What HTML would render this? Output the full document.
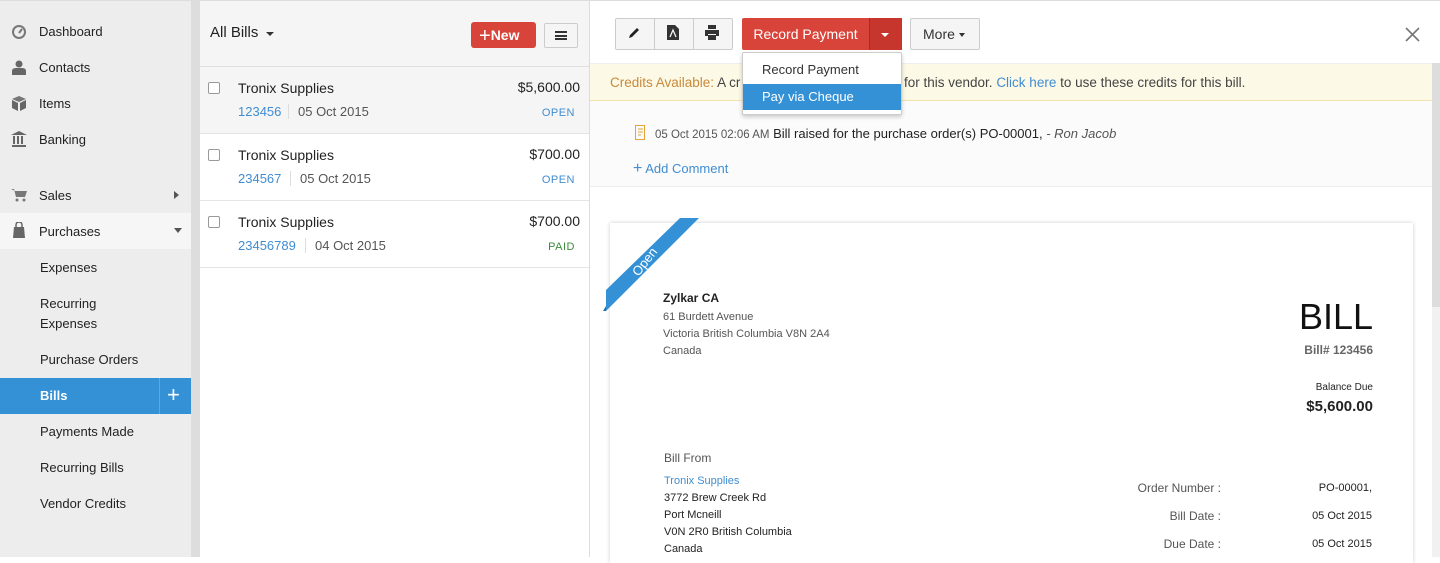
<!DOCTYPE html>
<html><head><meta charset="utf-8"><style>
*{box-sizing:border-box;margin:0;padding:0}
body{width:1440px;height:557px;overflow:hidden;font-family:"Liberation Sans",sans-serif;font-size:13px;color:#222;background:#fff;position:relative}
.abs{position:absolute}
.side{left:0;top:0;width:191px;height:557px;background:#ededed;border-top:1px solid #ddd}
.sb{left:191px;top:0;width:9px;height:557px;background:#ddd}
.nav{position:absolute;left:39px;font-size:13px;color:#222}
.sub{position:absolute;left:40px;font-size:13px;color:#222;line-height:20px}
.list{left:200px;top:0;width:390px;height:557px;background:#fff;border-right:1px solid #ddd;border-top:1px solid #ddd}
.row{position:absolute;left:0;width:389px;height:67px;border-bottom:1px solid #e4e4e4}
.cb{position:absolute;left:8px;top:15px;width:12px;height:12px;border:1px solid #999;border-radius:2px;background:#fff}
.nm{position:absolute;left:38px;top:13px;font-size:14px}
.amt{position:absolute;right:9px;top:12px;font-size:14px}
.num{position:absolute;left:38px;top:37px;font-size:13px;color:#408dd2}
.dt{position:absolute;top:37px;font-size:13px;color:#555;border-left:1px solid #ddd;padding-left:9px}
.st{position:absolute;right:14px;top:40px;font-size:11px;letter-spacing:.5px}
.btn{position:absolute;border:1px solid #ccc;background:#f5f5f5;border-radius:2px}
</style></head><body>
<div class="abs side"></div>
<div class="abs sb"></div>
<svg class="abs" style="left:11px;top:24px" width="16" height="16" viewBox="0 0 16 16"><circle cx="8" cy="8" r="7" fill="#777"/><circle cx="8" cy="8" r="5" fill="#ededed"/><path d="M8 9L11 5" stroke="#777" stroke-width="2"/></svg>
<div class="nav" style="top:24px">Dashboard</div>
<svg class="abs" style="left:12px;top:60px" width="14" height="15" viewBox="0 0 14 15"><circle cx="7" cy="4" r="3.5" fill="#666"/><path d="M0 15V11Q0 8 4 8H10Q14 8 14 11V15Z" fill="#666"/></svg>
<div class="nav" style="top:60px">Contacts</div>
<svg class="abs" style="left:12px;top:96px" width="14" height="15" viewBox="0 0 14 15"><path d="M7 0L14 3L7 6L0 3Z" fill="#777"/><path d="M0 4L6 7V15L0 12Z M14 4L8 7V15L14 12Z" fill="#666"/></svg>
<div class="nav" style="top:96px">Items</div>
<svg class="abs" style="left:11px;top:131px" width="16" height="16" viewBox="0 0 16 16"><path d="M8 0L16 4H0Z M1 14H15V16H1Z M2 5H4V13H2Z M6 5H8V13H6Z M10 5H12V13H10Z" fill="#666"/></svg>
<div class="nav" style="top:132px">Banking</div>
<svg class="abs" style="left:11px;top:188px" width="16" height="14" viewBox="0 0 16 14"><path d="M0 1H3L5 9H14L16 3H4" fill="#777"/><circle cx="6" cy="12" r="1.5" fill="#777"/><circle cx="13" cy="12" r="1.5" fill="#777"/></svg>
<div class="nav" style="top:188px">Sales</div>
<div class="abs" style="left:174px;top:191px;border-left:5px solid #555;border-top:4px solid transparent;border-bottom:4px solid transparent"></div>
<div class="abs" style="left:0;top:213px;width:191px;height:36px;background:#f6f6f6"></div>
<svg class="abs" style="left:13px;top:222px" width="12" height="16" viewBox="0 0 12 16"><path d="M3 5V3Q3 0 6 0Q9 0 9 3V5" stroke="#666" fill="none" stroke-width="1.5"/><path d="M1 5H11L12 16H0Z" fill="#666"/></svg>
<div class="nav" style="top:224px">Purchases</div>
<div class="abs" style="left:174px;top:228px;border-top:5px solid #555;border-left:4px solid transparent;border-right:4px solid transparent"></div>
<div class="sub" style="top:258px">Expenses</div>
<div class="sub" style="top:294px">Recurring<br>Expenses</div>
<div class="sub" style="top:350px">Purchase Orders</div>
<div class="abs" style="left:0;top:378px;width:191px;height:36px;background:#3591d6"></div>
<div class="abs" style="left:159px;top:378px;width:1px;height:36px;background:#5ea8e0"></div>
<div class="sub" style="top:386px;color:#fff;font-weight:bold">Bills</div>
<div class="abs" style="left:167px;top:383px;color:#fff;font-size:22px;line-height:24px">+</div>
<div class="sub" style="top:422px">Payments Made</div>
<div class="sub" style="top:458px">Recurring Bills</div>
<div class="sub" style="top:494px">Vendor Credits</div>

<div class="abs list">
 <div class="abs" style="left:0;top:0;width:389px;height:66px;background:#f5f5f5;border-bottom:1px solid #e0e0e0"></div>
 <div class="abs" style="left:10px;top:23px;font-size:15px">All Bills</div>
 <div class="abs" style="left:66px;top:31px;border-top:4px solid #333;border-left:4px solid transparent;border-right:4px solid transparent"></div>
 <div class="abs" style="left:271px;top:21px;width:65px;height:26px;background:#d9443a;border-radius:3px;color:#fff;font-size:14px;font-weight:bold;line-height:26px;padding-left:8px"><span style="font-size:20px;font-weight:normal;vertical-align:-2px">+</span>New</div>
 <div class="btn" style="left:344px;top:22px;width:34px;height:25px"><div class="abs" style="left:10px;top:7px;width:12px;height:9px;border-top:2px solid #333;border-bottom:2px solid #333"></div><div class="abs" style="left:10px;top:11px;width:12px;height:2px;background:#333"></div></div>
 <div class="row" style="top:66px;background:#f5f5f5"><div class="cb"></div><div class="nm">Tronix Supplies</div><div class="amt">$5,600.00</div><div class="num">123456</div><div class="dt" style="left:88px">05 Oct 2015</div><div class="st" style="color:#408dd2">OPEN</div></div>
 <div class="row" style="top:133px"><div class="cb"></div><div class="nm">Tronix Supplies</div><div class="amt">$700.00</div><div class="num">234567</div><div class="dt" style="left:90px">05 Oct 2015</div><div class="st" style="color:#408dd2">OPEN</div></div>
 <div class="row" style="top:200px"><div class="cb"></div><div class="nm">Tronix Supplies</div><div class="amt">$700.00</div><div class="num">23456789</div><div class="dt" style="left:105px">04 Oct 2015</div><div class="st" style="color:#3a8a3a">PAID</div></div>
</div>

<div class="abs" style="left:590px;top:0;width:850px;height:1px;background:#ddd"></div>
<div class="btn" style="left:615px;top:18px;width:118px;height:32px"></div>
<div class="abs" style="left:654px;top:19px;width:1px;height:30px;background:#ccc"></div>
<div class="abs" style="left:693px;top:19px;width:1px;height:30px;background:#ccc"></div>
<svg class="abs" style="left:627px;top:26px" width="14" height="14" viewBox="0 0 14 14"><path d="M2 12L3 9L10 2L12 4L5 11Z" fill="#222"/></svg>
<svg class="abs" style="left:667px;top:25px" width="12" height="15" viewBox="0 0 12 15"><path d="M0 0H8L12 4V15H0Z" fill="#333"/><path d="M3 12L6 5L9 12" stroke="#f5f5f5" fill="none" stroke-width="1.3"/></svg>
<svg class="abs" style="left:704px;top:25px" width="16" height="15" viewBox="0 0 16 15"><path d="M4 0H12V4H4Z M1 5H15V11H12V9H4V11H1Z M4 10H12V15H4Z" fill="#333"/></svg>
<div class="abs" style="left:742px;top:18px;width:127px;height:32px;background:#d9443a;border-radius:2px 0 0 2px;color:#fff;font-size:14px;line-height:32px;text-align:center">Record Payment</div>
<div class="abs" style="left:869px;top:18px;width:33px;height:32px;background:#c7362c;border-left:1px solid #a82a22"></div>
<div class="abs" style="left:881px;top:33px;border-top:4px solid #fff;border-left:4px solid transparent;border-right:4px solid transparent"></div>
<div class="btn" style="left:910px;top:18px;width:70px;height:32px;font-size:14px;line-height:30px;padding-left:12px;color:#333">More</div>
<div class="abs" style="left:959px;top:33px;border-top:4px solid #333;border-left:3.5px solid transparent;border-right:3.5px solid transparent"></div>
<svg class="abs" style="left:1405px;top:27px" width="15" height="15" viewBox="0 0 15 15"><path d="M1 1L14 14M14 1L1 14" stroke="#777" stroke-width="1.6"/></svg>

<div class="abs" style="left:590px;top:63px;width:842px;height:38px;background:#fcf9e6;border-top:1px solid #eee;border-bottom:1px solid #f0e2a8"></div>
<div class="abs" style="left:610px;top:75px;font-size:13.5px;color:#444"><span style="color:#c88a3a">Credits Available:</span> A cr</div>
<div class="abs" style="left:904px;top:75px;font-size:13.5px;color:#444">for this vendor. <span style="color:#408dd2">Click here</span> to use these credits for this bill.</div>
<div class="abs" style="left:590px;top:101px;width:842px;height:86px;background:#fbfbfb;border-bottom:1px solid #eee"></div>
<svg class="abs" style="left:635px;top:125px" width="12" height="15" viewBox="0 0 12 15"><path d="M0.5 0.5H9.5V14.5H0.5Z" fill="none" stroke="#e6a23a"/><path d="M3 4H8M3 7H8M3 10H6" stroke="#e6a23a"/></svg>
<div class="abs" style="left:655px;top:126px;font-size:13px;color:#222"><span style="font-size:11.5px;color:#555">05 Oct 2015 02:06 AM</span> Bill raised for the purchase order(s) PO-00001, <i style="color:#555">- Ron Jacob</i></div>
<div class="abs" style="left:633px;top:160px;font-size:13px;color:#408dd2"><span style="font-size:16px">+</span> Add Comment</div>

<div class="abs" style="left:742px;top:52px;width:160px;height:63px;background:#fff;border:1px solid #ccc;box-shadow:0 2px 4px rgba(0,0,0,.2);border-radius:2px"></div>
<div class="abs" style="left:762px;top:62px;font-size:13px;color:#333">Record Payment</div>
<div class="abs" style="left:743px;top:84px;width:158px;height:26px;background:#3591d6;color:#fff;font-size:13px;line-height:26px;padding-left:19px">Pay via Cheque</div>

<div class="abs" style="left:1432px;top:63px;width:8px;height:494px;background:#f1f1f1"></div>
<div class="abs" style="left:1432px;top:63px;width:8px;height:244px;background:#ddd"></div>

<div class="abs" style="left:610px;top:223px;width:803px;height:340px;background:#fff;box-shadow:0 0 4px rgba(0,0,0,.2)"></div>
<svg class="abs" style="left:600px;top:210px" width="110" height="110"><polygon points="80,8 99,8 6,101 6,80" fill="#3591d6"/><polygon points="6,101 6,96 3,101" fill="#1f6fa8"/><text x="0" y="4" text-anchor="middle" transform="translate(45,52) rotate(-52)" fill="#fff" font-family="Liberation Sans" font-size="13">Open</text></svg>
<div class="abs" style="left:663px;top:291px;font-size:12px;font-weight:bold">Zylkar CA</div>
<div class="abs" style="left:663px;top:309px;font-size:11px;color:#555;line-height:17px">61 Burdett Avenue<br>Victoria British Columbia V8N 2A4<br>Canada</div>
<div class="abs" style="right:67px;top:296px;font-size:36px;color:#111">BILL</div>
<div class="abs" style="right:67px;top:343px;font-size:12px;font-weight:bold;color:#666">Bill# 123456</div>
<div class="abs" style="right:67px;top:382px;font-size:10px;color:#222">Balance Due</div>
<div class="abs" style="right:67px;top:398px;font-size:15px;font-weight:bold;color:#222">$5,600.00</div>
<div class="abs" style="left:664px;top:451px;font-size:12px;color:#555">Bill From</div>
<div class="abs" style="left:664px;top:473px;font-size:11px;line-height:17px;color:#222"><span style="color:#408dd2">Tronix Supplies</span><br>3772 Brew Creek Rd<br>Port Mcneill<br>V0N 2R0 British Columbia<br>Canada</div>
<div class="abs" style="left:1090px;top:474px;width:131px;text-align:right;font-size:12px;color:#555;line-height:28px">Order Number :<br>Bill Date :<br>Due Date :</div>
<div class="abs" style="left:1260px;top:474px;width:112px;text-align:right;font-size:11px;color:#222;line-height:28px">PO-00001,<br>05 Oct 2015<br>05 Oct 2015</div>
</body></html>
